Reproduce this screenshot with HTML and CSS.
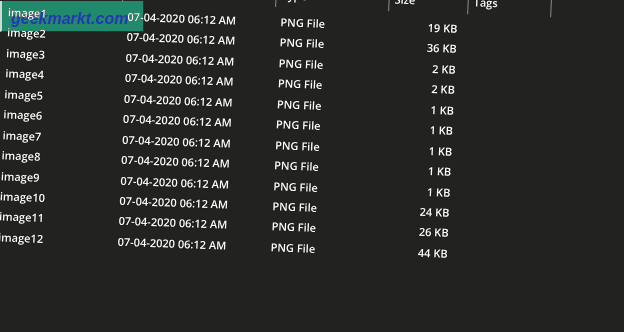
FILE: index.html
```html
<!DOCTYPE html>
<html lang="en">
<head>
  <meta charset="UTF-8" />
  <title>Files</title>
  <link rel="stylesheet" href="styles.css">
</head>
<body>
  <div class="explorer">
    <div class="files">
      <div class="head">
        <div class="col">Name</div>
        <div class="col">Date modified</div>
        <div class="col">Type</div>
        <div class="col">Size</div>
        <div class="col last">Tags</div>
      </div>

      <div class="row"><span class="name">image1</span><span class="date">07-04-2020 06:12 AM</span><span class="type">PNG File</span><span class="size">19 KB</span><span></span></div>
      <div class="row"><span class="name">image2</span><span class="date">07-04-2020 06:12 AM</span><span class="type">PNG File</span><span class="size">36 KB</span><span></span></div>
      <div class="row"><span class="name">image3</span><span class="date">07-04-2020 06:12 AM</span><span class="type">PNG File</span><span class="size">2 KB</span><span></span></div>
      <div class="row"><span class="name">image4</span><span class="date">07-04-2020 06:12 AM</span><span class="type">PNG File</span><span class="size">2 KB</span><span></span></div>
      <div class="row"><span class="name">image5</span><span class="date">07-04-2020 06:12 AM</span><span class="type">PNG File</span><span class="size">1 KB</span><span></span></div>
      <div class="row"><span class="name">image6</span><span class="date">07-04-2020 06:12 AM</span><span class="type">PNG File</span><span class="size">1 KB</span><span></span></div>
      <div class="row"><span class="name">image7</span><span class="date">07-04-2020 06:12 AM</span><span class="type">PNG File</span><span class="size">1 KB</span><span></span></div>
      <div class="row"><span class="name">image8</span><span class="date">07-04-2020 06:12 AM</span><span class="type">PNG File</span><span class="size">1 KB</span><span></span></div>
      <div class="row"><span class="name">image9</span><span class="date">07-04-2020 06:12 AM</span><span class="type">PNG File</span><span class="size">1 KB</span><span></span></div>
      <div class="row"><span class="name">image10</span><span class="date">07-04-2020 06:12 AM</span><span class="type">PNG File</span><span class="size">24 KB</span><span></span></div>
      <div class="row"><span class="name">image11</span><span class="date">07-04-2020 06:12 AM</span><span class="type">PNG File</span><span class="size">26 KB</span><span></span></div>
      <div class="row"><span class="name">image12</span><span class="date">07-04-2020 06:12 AM</span><span class="type">PNG File</span><span class="size">44 KB</span><span></span></div>
    </div>

    <div class="stamp">geekmarkt.com</div>
  </div>
</body>
</html>
```

FILE: styles.css
```css
body {
  margin: 0;
  padding: 0;
  background: #222220;
  font-family: "Open Sans", "Noto Sans", sans-serif;
  color: #fff;
}

.explorer {
  width: 624px;
  height: 332px;
  overflow: hidden;
  position: relative;
  background: #222220;
}

/* the screenshot was taken at a slight tilt */
.files {
  margin-top: -28px;
  width: 600px;
  transform-origin: 0 28px;
  transform: skew(-2.5deg, 2.1deg);
  font-size: 11px;
  font-weight: 600;
  text-shadow: 0 0 1px #000;
}

.head,
.row {
  display: grid;
  grid-template-columns: 122px 153px 113px 79px 84px;
}

.head {
  height: 30px;
  align-items: end;
}

.head .col {
  height: 22px;
  margin-bottom: 5.5px;
  padding-left: 5px;
  padding-bottom: 5px;
  box-sizing: border-box;
  border-left: 1.5px solid #8d8d8d;
  display: flex;
  align-items: flex-end;
  line-height: 14px;
}

.head .col:first-child {
  border-left: none;
}

.head .last {
  border-right: 1.5px solid #8d8d8d;
}

.row {
  height: 20.45px;
  line-height: 20.45px;
  white-space: nowrap;
}

.row span {
  padding-left: 6px;
}

.row .name {
  padding-left: 8.5px;
}

.row .size {
  text-align: right;
  padding-right: 9px;
}

.stamp {
  position: absolute;
  top: 1px;
  left: 0;
  width: 144px;
  height: 31px;
  border-left: 2px solid #cfd9d4;
  border-right: 1px solid #14382c;
  border-bottom: 1px solid #14382c;
  background: #1c8a6c;
  mix-blend-mode: lighten;
  color: #2438b4;
  font-family: "Liberation Sans", Arial, sans-serif;
  font-size: 16px;
  font-weight: bold;
  font-style: italic;
  line-height: 36px;
  padding-left: 9px;
  box-sizing: border-box;
}
```
